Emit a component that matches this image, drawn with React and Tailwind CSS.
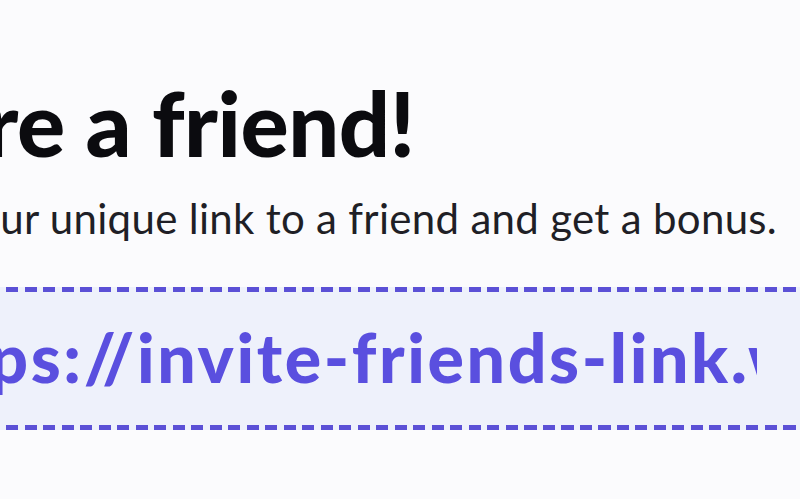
export default function App() {
  return (
    <div
      className="h-[499px] w-[800px] overflow-hidden bg-[#fbfbfd] text-[#0b0b0f]"
      style={{ fontFamily: "Lato, 'Open Sans', sans-serif" }}
    >
      <div className="-ml-[160px] w-[1300px] pt-[72px]">
        <h1 className="text-[90px] font-black leading-[100px] tracking-[-0.5px]">
          Share a friend!
        </h1>

        <p className="mt-[20px] text-[42px] leading-[52px] tracking-[0.3px] text-[#1f1f26]">
          Share your unique link to a friend and get a bonus.
        </p>

        {/* link box with dashed top/bottom edges */}
        <div className="mt-[43px] w-[1150px] bg-[#eef1fb]">
          <div className="h-[5px] bg-[repeating-linear-gradient(90deg,#5b50d6_0_12px,transparent_12px_18.5px)]" />
          <div className="flex h-[133px] items-center">
            <div className="ml-[52px] w-[865px] overflow-hidden whitespace-nowrap pb-[4px]">
              <span className="text-[68px] font-black tracking-[2.6px] text-[#5a4fdf]">
                https://invite-friends-link.world/abc123
              </span>
            </div>
          </div>
          <div className="h-[5px] bg-[repeating-linear-gradient(90deg,#5b50d6_0_12px,transparent_12px_18.5px)]" />
        </div>
      </div>
    </div>
  );
}
